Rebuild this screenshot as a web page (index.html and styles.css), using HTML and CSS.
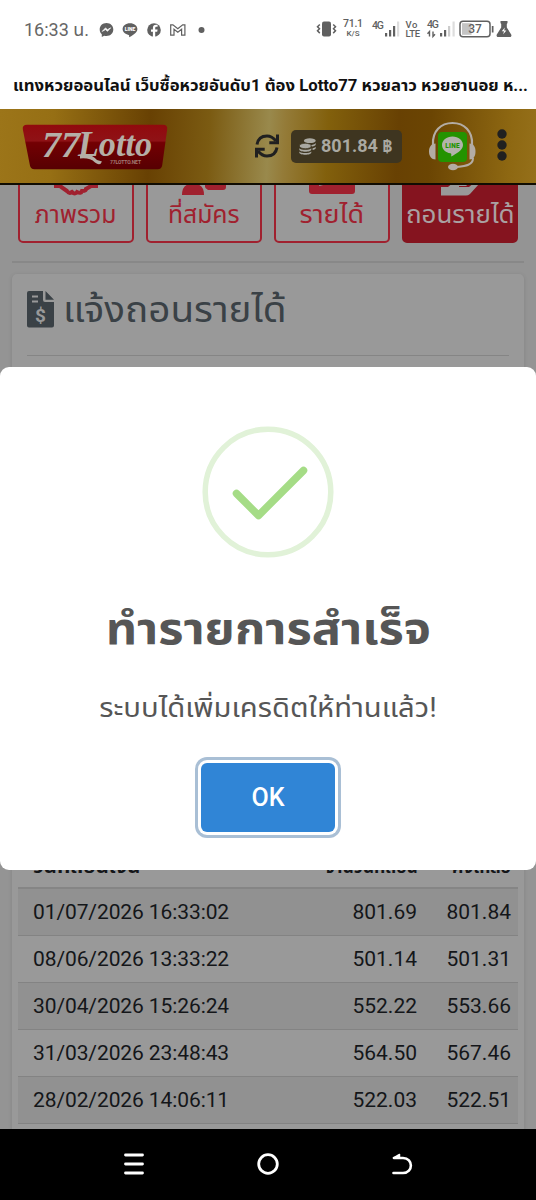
FILE: index.html
```html
<!DOCTYPE html>
<html lang="th">
<head>
<meta charset="utf-8">
<title>77Lotto</title>
<link rel="stylesheet" href="styles.css">
</head>
<body>
<div class="phone">
  <div class="status">
    <span class="clock">16:33 น.</span>
    <svg class="notif" width="110" height="16" viewBox="0 0 110 16">
      <g fill="#606060">
        <path d="M7.500 1C3.500 1 .7 3.800.7 7.400c0 2 .8 3.600 2.100 4.800V15l2.400-1.300c.7.2 1.500.3 2.300.3 4 0 6.800-2.900 6.800-6.500S11.500 1 7.500 1z"/>
        <path d="M3.200 9.400l3.300-3.500 2 1.800 3.200-1.900-3.200 3.500-2-1.700z" fill="#fff" stroke="#fff" stroke-width=".7"/>
        <path d="M31 1.200c-4.200 0-7.400 2.600-7.400 5.900 0 3 2.500 5.300 6 5.800.9.200.5 1.500.5 2.400 2.700-1.300 8.300-4.400 8.300-8.200 0-3.300-3.200-5.900-7.400-5.900z"/>
        <circle cx="55" cy="8" r="6.800"/>
        <path d="M56.200 15V9.700h2l.4-2.200h-2.400V6c0-.8.5-1.200 1.300-1.200h1.100V3c-3-.6-4.700.5-4.700 2.900v1.600H52v2.200h1.900V15z" fill="#fff"/>
        <circle cx="102.500" cy="8" r="3"/>
      </g>
      <path d="M71.700 13.200V2.800h2.200l4.900 4 4.900-4h2.200v10.400h-3.300V7.300l-3.800 3-3.800-3v5.900z" fill="none" stroke="#606060" stroke-width="1.200"/>
      <text x="31" y="9" class="line-tiny">LINE</text>
    </svg>
    <span class="spacer"></span>
    <svg class="signals" width="198" height="32" viewBox="0 0 198 32">
      <g fill="#606060">
        <rect x="6" y="8.500" width="9" height="15" rx="2"/>
        <path d="M3.800 11.500L1.500 13.800l2 2-2 2 2.300 2.300M17.200 11.500l2.300 2.300-2 2 2 2-2.300 2.300" fill="none" stroke="#606060" stroke-width="1.500"/>
        <g class="mini">
          <text x="37" y="13.500" text-anchor="middle" textLength="20">71.1</text>
          <text x="37" y="23" text-anchor="middle" class="micro" textLength="13">K/S</text>
          <text x="56" y="16" textLength="12">4G</text>
          <text x="89.500" y="14.500" class="volte" textLength="12">Vo</text>
          <text x="89.500" y="24" class="volte" textLength="14.500">LTE</text>
          <text x="111" y="15" textLength="12">4G</text>
        </g>
        <rect x="69" y="20" width="2.200" height="3.500"/><rect x="73" y="17" width="2.200" height="6.500"/><rect x="77" y="13" width="2.200" height="10.500"/><rect x="81" y="8.500" width="2.200" height="15" fill="#ddd"/>
        <path d="M113.500 23.500v-5l-2 2.200M117 18.500v5l2-2.200" fill="none" stroke="#606060" stroke-width="1.400"/>
        <rect x="124" y="20" width="2.200" height="3.500"/><rect x="128" y="17" width="2.200" height="6.500"/><rect x="132" y="13" width="2.200" height="10.500" fill="#ccc"/><rect x="136.500" y="8.500" width="2.200" height="15" fill="#ddd"/>
        <rect x="144" y="8.200" width="30" height="15.600" rx="3" fill="#fff" stroke="#606060" stroke-width="1.500"/>
        <rect x="146" y="10.200" width="9.500" height="11.600" fill="#c4c4c4"/>
        <rect x="175.800" y="13" width="1.700" height="6.500"/>
        <text x="159" y="20.300" text-anchor="middle" class="batt">37</text>
        <path d="M184.500 8h7v2l-.7 1v3.500l4.400 7c.6 1.200 0 2.500-1.200 2.500h-12c-1.200 0-1.800-1.300-1.200-2.500l4.400-7V11l-.7-1z"/>
        <path d="M188.800 14.500l-3 3.800h2.200l-.8 3 3.200-3.900h-2.200z" fill="#fff"/>
      </g>
    </svg>
  </div>
  <div class="titlebar"><span class="fit wide-title">แทงหวยออนไลน์ เว็บซื้อหวยอันดับ1 ต้อง Lotto77 หวยลาว หวยฮานอย ห...</span></div>

  <header class="topbar">
    <svg class="logo" width="146" height="46" viewBox="0 0 146 46">
      <defs><linearGradient id="red" x1="0" y1="0" x2="0" y2="1"><stop offset="0" stop-color="#910a0d"/><stop offset=".36" stop-color="#8f1216"/><stop offset=".4" stop-color="#730003"/><stop offset="1" stop-color="#570002"/></linearGradient></defs>
      <path d="M5 .8h136q4.800 0 4.200 4.500l-5 36q-.6 4-4.500 4H12.500q-3.900 0-4.600-4L.8 5.300Q.2.800 5 .8z" fill="url(#red)"/>
      <text x="20" y="32.500" class="logo-77" textLength="38" lengthAdjust="spacingAndGlyphs">77</text>
      <text x="56" y="32" class="logo-lotto" textLength="74" lengthAdjust="spacingAndGlyphs">Lotto</text>
      <path d="M58 32q10-4 17 4l5 1.500q-2 5-7 1-5-5-15-4z" fill="#b5afa7"/>
      <text x="88" y="39.500" class="logo-net" textLength="31">77LOTTO.NET</text>
    </svg>
    <svg class="refresh" width="26" height="26" viewBox="0 0 26 26" fill="none" stroke="#202020" stroke-width="3">
      <path d="M3 11.500C4 5.500 8 3 13 3c4 0 6.500 1.800 9 5M23 14.500c-1 6-5 8.500-10 8.500-4 0-6.500-1.800-9-5"/>
      <path d="M23.500 1.500v8.200h-8.200M2.500 24.500v-8.200h8.200"/>
    </svg>
    <div class="balance">
      <svg width="17" height="17" viewBox="0 0 17 17" fill="#aaa9a2">
        <ellipse cx="10.800" cy="2.700" rx="5.900" ry="2.400"/>
        <path d="M16.700 5v1.400c0 1.100-1.600 1.800-3.600 2L11 7.200c2.500 0 4.800-.8 5.700-2.200zM16.700 8.800v1.300c0 1-1.300 1.700-3.100 2V10.300c1.300-.2 2.500-.7 3.100-1.500z"/>
        <ellipse cx="6.300" cy="8" rx="6" ry="2.700" stroke="#3d3623" stroke-width=".7"/>
        <path d="M.3 10.200c2 2 10 2 12 0v1.300c0 3-12 3-12 0zM.3 13.400c2 2 10 2 12 0v1.100c0 3-12 3-12 0z"/>
      </svg>
      <span class="amount">801.84 ฿</span>
    </div>
    <svg class="support" width="49" height="50" viewBox="0 0 49 50">
      <path d="M5 24C4 10 13 2 24.500 2S45 10 44 24" fill="none" stroke="#b3aca4" stroke-width="2.200"/>
      <rect x="10" y="11" width="29" height="30" rx="4" fill="#249300"/>
      <path d="M7.500 22.500v16C3.500 38.500 1 35 1 30.500s2.500-8 6.500-8zM41.500 22.500v16c4 0 6-3.500 6-8s-2-8-6-8z" fill="#b3aca4"/>
      <path d="M45 37c0 7-7 8-16 9" fill="none" stroke="#b3aca4" stroke-width="2"/>
      <ellipse cx="25" cy="46" rx="5" ry="3.300" fill="#b3aca4"/>
      <path d="M24.500 15.500c-6 0-10.500 3.700-10.500 8.500 0 4.300 3.500 7.500 8.500 8.300 1.300.2.700 2 .7 3.200 4-2 11.800-6.300 11.800-11.500 0-4.800-4.500-8.500-10.500-8.500z" fill="#b3b3ab"/>
      <text x="24.500" y="26.800" class="line-badge" textLength="14.500">LINE</text>
    </svg>
    <svg class="dots" width="10" height="32" viewBox="0 0 10 32" fill="#202020"><circle cx="5" cy="5" r="4.700"/><circle cx="5" cy="16" r="4.700"/><circle cx="5" cy="27" r="4.700"/></svg>
  </header>

  <main class="page">
    <nav class="tabs">
      <div class="tab">
        <svg width="46" height="34" viewBox="0 0 46 34" fill="none" stroke="#a0212f" stroke-width="4"><path d="M1 25h6l7 5q2 3 5 1 3 3 5 0 4 2 5-1 4 0 4-2l5-3h7"/></svg>
        <span class="fit wide-3">ภาพรวม</span></div>
      <div class="tab">
        <svg width="46" height="36" viewBox="0 0 46 36" fill="#a0212f"><path d="M1 35q0-10 8-11h6q8 1 8 11zM24 20h21v7q0 3-3 3H27q-3-2-3-3z"/></svg>
        <span class="fit wide-3">ที่สมัคร</span></div>
      <div class="tab">
        <svg width="46" height="34" viewBox="0 0 46 34" fill="#a0212f"><rect x="0" y="4" width="46" height="29" rx="3"/><path d="M10 24l4-1" stroke="#999" stroke-width="2"/></svg>
        <span class="fit wide-12">รายได้</span></div>
      <div class="tab active">
        <svg width="40" height="36" viewBox="0 0 40 36" fill="#999"><path d="M1 27h7l6-5h12q3 2 0 4h-7v1h10l6-5q4-1 4 2L30 34q-2 1.500-4 1.500H1z"/></svg>
        <span class="fit wide-8">ถอนรายได้</span></div>
    </nav>
    <div class="rule"></div>
    <section class="card">
      <h2 class="heading">
        <svg width="28" height="37" viewBox="0 0 28 37"><path d="M2 0h14v9q0 2 2 2h9v23.500q0 2-2 2H2q-2 0-2-2V2Q0 0 2 0zM18.500 0l8.500 8.700h-8.500z" fill="#3a4146"/><path d="M5 5.500h6M5 10.500h6" stroke="#999" stroke-width="1.800"/><text x="13.500" y="31" class="dollar">$</text></svg>
        <span class="fit wide-heading">แจ้งถอนรายได้</span>
      </h2>
      <div class="card-rule"></div>
      <table class="history">
        <thead><tr><th><span class="fit wide-th">วันที่ถอนเงิน</span></th><th>จำนวนที่ถอน</th><th>คงเหลือ</th></tr></thead>
        <tbody>
          <tr><td>01/07/2026 16:33:02</td><td>801.69</td><td>801.84</td></tr>
          <tr><td>08/06/2026 13:33:22</td><td>501.14</td><td>501.31</td></tr>
          <tr><td>30/04/2026 15:26:24</td><td>552.22</td><td>553.66</td></tr>
          <tr><td>31/03/2026 23:48:43</td><td>564.50</td><td>567.46</td></tr>
          <tr><td>28/02/2026 14:06:11</td><td>522.03</td><td>522.51</td></tr>
          <tr><td></td><td></td><td></td></tr>
        </tbody>
      </table>
    </section>
    <div class="modal">
      <svg class="success" width="132" height="132" viewBox="0 0 132 132" fill="none"><circle cx="66" cy="66" r="62.800" stroke="#e1f2d8" stroke-width="5.500"/><path d="M34.500 67.500l22 22 45-45" stroke="#a5dc86" stroke-width="7.500" stroke-linecap="round" stroke-linejoin="round"/></svg>
      <h1><span class="fit wide-8">ทำรายการสำเร็จ</span></h1>
      <p><span class="fit wide-8">ระบบได้เพิ่มเครดิตให้ท่านแล้ว!</span></p>
      <button class="ok">OK</button>
    </div>
  </main>

  <footer class="navbar">
    <svg width="22" height="22" viewBox="0 0 22 22" stroke="#fff" stroke-width="2.800" stroke-linecap="round"><path d="M2.500 2h17M2.500 11h17M2.500 20h17"/></svg>
    <svg width="22" height="22" viewBox="0 0 22 22" stroke="#fff" stroke-width="2.800" fill="none"><circle cx="11" cy="11" r="9.300"/></svg>
    <svg width="22" height="22" viewBox="0 0 22 22" stroke="#fff" stroke-width="2.600" fill="none" stroke-linecap="round" stroke-linejoin="round"><path d="M2.500 20H12c10.500 0 10.500-15 0-15H3"/><path d="M2.500 5l6-3.500v3z" fill="#fff" stroke-width="1.500"/></svg>
  </footer>
</div>
</body>
</html>
```
FILE: styles.css
```css
* { box-sizing: border-box; }
body { margin: 0; background: #fff; font-family: Roboto, "Noto Sans Thai", "Noto Sans", sans-serif; }
svg { display: block; flex: none; }
.phone { width: 536px; height: 1200px; display: flex; flex-direction: column; overflow: hidden; }
.fit { display: inline-block; white-space: nowrap; }
.wide-title { transform: scaleX(1.045); transform-origin: left; }
.wide-3 { transform: scaleX(1.03); }
.wide-8 { transform: scaleX(1.082); }
.wide-12 { transform: scaleX(1.12); }
.wide-heading { transform: scaleX(1.072); transform-origin: left; padding-top: 3px; }
.wide-th { transform: scaleX(1.18); transform-origin: left; }

.status { height: 60px; display: flex; align-items: center; padding: 0 22px 0 24px; color: #666; flex: none; }
.clock { font-size: 18px; width: 75px; white-space: nowrap; }
.spacer { flex: 1; }
.line-tiny { font: 900 5px Roboto, sans-serif; fill: #fff; text-anchor: middle; }
.signals { margin-top: -2px; }
.mini { font-size: 10.500px; font-weight: 500; }
.micro { font-size: 8px; }
.volte { font-size: 9.500px; }
.batt { font-size: 12px; font-weight: 500; }

.titlebar { height: 49px; flex: none; padding: 14px 0 0 13px; font-size: 16px; line-height: 24px; font-weight: 700; color: #111; }

.topbar { height: 76px; flex: none; display: flex; align-items: center; padding: 0 29px 0 22px; border-bottom: 2px solid #100c02;
  background: linear-gradient(93deg, #9c7519 0%, #966f14 10%, #684103 28%, #7b5b12 39%, #99894c 50%, #947b38 53%, #82600c 61%, #684103 74%, #6b4503 80%, #8e6812 95%, #95701a 100%); }
.logo { margin-top: 1px; }
.logo-77, .logo-lotto { font-family: "Liberation Serif", serif; font-style: italic; font-weight: 700; fill: #b5afa7; }
.logo-77 { font-size: 36px; }
.logo-lotto { font-size: 35px; }
.logo-net { font: 700 5px Roboto, sans-serif; fill: #a47a75; }
.refresh { margin-left: 86px; }
.balance { margin-left: 11px; width: 111px; height: 33px; border-radius: 5px; background: #3e3520; display: flex; align-items: center; gap: 5px; padding-left: 8px; color: #aaa9a2; }
.amount { font-size: 18px; font-weight: 700; white-space: nowrap; }
.support { margin-left: 26px; }
.line-badge { font: 900 6.500px Roboto, sans-serif; fill: #249300; text-anchor: middle; }
.dots { margin-left: 20px; margin-top: -3px; }

.page { position: relative; flex: 1; min-height: 0; overflow: hidden; background: #949494; }
.tabs { display: grid; grid-template-columns: repeat(4, 116px); gap: 12px; padding-left: 18px; margin-top: -27px; }
.tab { height: 85px; border: 2px solid #a0212f; border-radius: 5px; background: #999; color: #a0212f; display: flex; flex-direction: column; align-items: center; font-size: 24px; line-height: 38px; white-space: nowrap; }
.tab svg { height: 36px; }
.active { background: #85141f; border-color: #85141f; color: #aaa1a2; }
.rule { height: 2px; background: #888; margin: 18px 12px 0; }
.card { margin: 11px 12px 0; height: 900px; border-radius: 5px; background: #999; box-shadow: 0 1px 4px rgba(0,0,0,.12); padding: 1px 6px; }
.heading { margin: 0; height: 80px; padding: 0 9px 12px; display: flex; align-items: center; gap: 8px; font-size: 36px; font-weight: 400; color: #3a4146; white-space: nowrap; }
.dollar { font: 700 19px Roboto, sans-serif; fill: #999; text-anchor: middle; }
.card-rule { height: 1px; margin: 0 9px; background: #858585; }
.history { margin-top: 480px; width: 500px; border-collapse: collapse; table-layout: fixed; font-size: 21px; color: #141619; }
.history th { height: 52px; padding: 0 7px 5px; vertical-align: bottom; line-height: 30px; font-size: 17.500px; text-align: right; border-bottom: 2px solid #858585; white-space: nowrap; }
.history td { height: 47px; padding: 0 7px; text-align: right; border-bottom: 1px solid #838383; }
.history th:first-child, .history td:first-child { text-align: left; padding-left: 15px; width: 300px; }
.history td:first-child { letter-spacing: -.1px; }
.history th:last-child, .history td:last-child { width: 94px; }
.history tbody tr:nth-child(odd) { background: #919191; }

.modal { position: absolute; left: 0; top: 182px; width: 536px; height: 503px; border-radius: 9px; background: #fff; display: flex; flex-direction: column; align-items: center; padding-top: 59px; color: #565656; }
.modal h1 { margin: 36px 0 0; font-size: 45px; line-height: 70px; font-weight: 700; }
.modal p { margin: 24px 0 0; font-size: 27px; line-height: 40px; }
.ok { margin-top: 35px; width: 134px; height: 69px; border: 0; border-radius: 6px; background: #3085d6; color: #fff; font: 500 25px Roboto, sans-serif; box-shadow: 0 0 0 3px #fff, 0 0 0 6px #a9bfd5; }

.navbar { height: 71px; flex: none; background: #000; display: flex; justify-content: space-between; align-items: center; padding: 0 123px 1px 123px; }
```
